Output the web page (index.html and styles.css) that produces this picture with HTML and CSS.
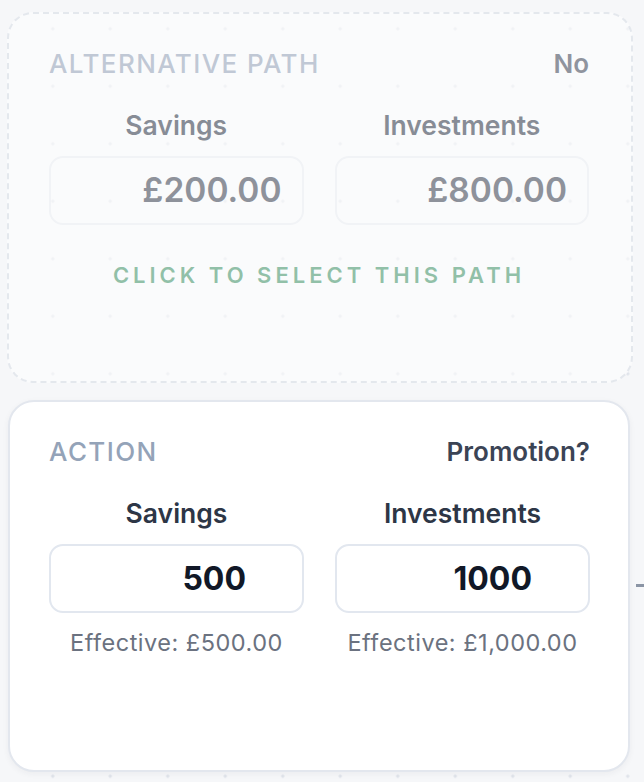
FILE: index.html
```html
<!DOCTYPE html>
<html lang="en">
<head>
    <meta charset="UTF-8">
    <meta name="viewport" content="width=device-width, initial-scale=1.0">
    <title>Path Planner</title>
    <link rel="stylesheet" href="styles.css">
</head>
<body>
    <div class="board">
        <div class="stack">
            <!-- faded alternative node -->
            <div class="path-card alt">
                <div class="card-head">
                    <span class="card-tag">Alternative Path</span>
                    <span class="card-flag">No</span>
                </div>
                <div class="fields">
                    <div class="field">
                        <div class="field-label">Savings</div>
                        <div class="amount-box">£200.00</div>
                    </div>
                    <div class="field">
                        <div class="field-label">Investments</div>
                        <div class="amount-box">£800.00</div>
                    </div>
                </div>
                <div class="select-hint">Click to select this path</div>
            </div>

            <div class="path-card action">
                <div class="card-head">
                    <span class="card-tag">Action</span>
                    <span class="card-flag">Promotion?</span>
                </div>
                <div class="fields">
                    <div class="field">
                        <div class="field-label">Savings</div>
                        <input class="amount-input" type="text" value="500">
                        <div class="effective">Effective: £500.00</div>
                    </div>
                    <div class="field">
                        <div class="field-label">Investments</div>
                        <input class="amount-input" type="text" value="1000">
                        <div class="effective">Effective: £1,000.00</div>
                    </div>
                </div>
            </div>
        </div>
        <span class="edge"></span>
    </div>
</body>
</html>
```

FILE: styles.css
```css
:root {
    --page-bg: #f6f7f9;
    --dot: #dfe3ea;
    --card-border: #e3e7ee;
    --muted: #94a3b8;
    --label: #2d3646;
    --ink: #111827;
    --hint: #3f9466;
}

* {
    margin: 0;
    padding: 0;
    box-sizing: border-box;
    font-family: 'Inter', 'Liberation Sans', sans-serif;
}

body {
    background-color: var(--page-bg);
    background-image: radial-gradient(circle, var(--dot) 1.4px, transparent 1.8px);
    background-size: 57.5px 57.5px;
    background-position: 24px 0;
    width: 644px;
    height: 782px;
    overflow: hidden;
}

.board {
    position: relative;
    padding: 12px 0 0 7px;
}

.stack {
    width: 626px;
    display: flex;
    flex-direction: column;
    gap: 17px;
}

.path-card {
    height: 371px;
    border-radius: 26px;
    padding: 33px 42px 0 40px;
    background: #fff;
}

.path-card.alt {
    border: 2px dashed #d6dce5;
    opacity: 0.55;
}

.path-card.action {
    width: 622px;
    margin-left: 1px;
    height: 372px;
    border: 2px solid var(--card-border);
    padding: 33px 38px 0 39px;
    box-shadow: 0 2px 6px rgba(30, 41, 59, 0.05);
}

.card-head {
    display: flex;
    justify-content: space-between;
    align-items: center;
    height: 32px;
}

.card-tag {
    font-size: 26px;
    font-weight: 500;
    text-transform: uppercase;
    letter-spacing: 1.4px;
    color: var(--muted);
}

.card-flag {
    font-size: 26px;
    font-weight: 600;
    color: #3b4455;
}

.fields {
    display: grid;
    grid-template-columns: 1fr 1fr;
    gap: 31px;
    margin-top: 30px;
}

.field {
    display: flex;
    flex-direction: column;
    align-items: stretch;
}

.field-label {
    text-align: center;
    font-size: 26.5px;
    font-weight: 600;
    line-height: 32px;
    color: var(--label);
    margin-bottom: 15px;
}

.amount-box,
.amount-input {
    height: 69px;
    border-radius: 14px;
    text-align: right;
    line-height: 65px;
}

.amount-box {
    border: 2px solid #eef1f5;
    padding-right: 20px;
    font-size: 33.5px;
    font-weight: 600;
    color: #3a4150;
}

.amount-input {
    border: 2px solid #e2e7ef;
    background: #fff;
    padding-right: 56px;
    font-size: 32px;
    font-weight: 700;
    color: var(--ink);
    outline: none;
    width: 100%;
}

.effective {
    text-align: center;
    font-size: 23.5px;
    letter-spacing: 0.5px;
    line-height: 28px;
    color: #6b7280;
    margin-top: 16px;
}

.select-hint {
    text-align: center;
    margin-top: 37px;
    font-size: 22px;
    font-weight: 600;
    letter-spacing: 4px;
    text-transform: uppercase;
    color: var(--hint);
}

/* connector leaving the action node */
.edge {
    position: absolute;
    left: 636px;
    top: 584px;
    width: 12px;
    height: 3px;
    background: #8b95a5;
}
```
